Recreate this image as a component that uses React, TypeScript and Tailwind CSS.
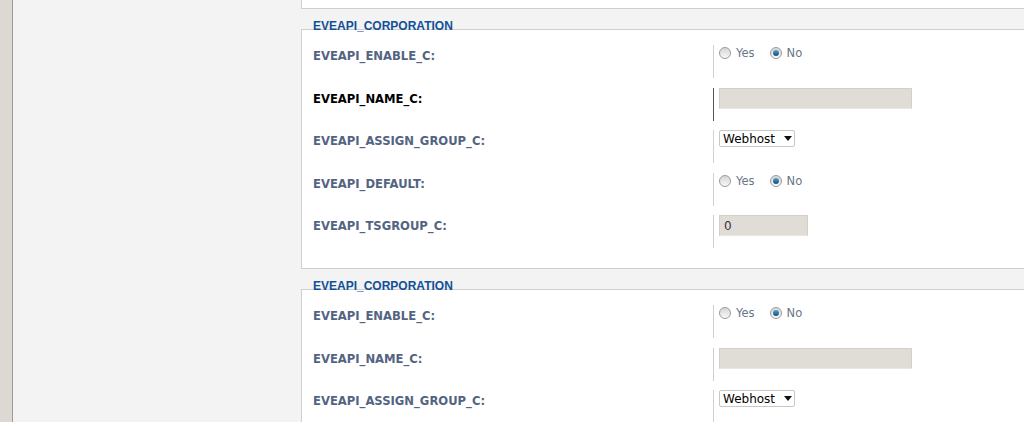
import React from "react";

type Row =
  | { label: string; kind: "radio"; hover?: boolean }
  | { label: string; kind: "text"; value?: string; width: string; hover?: boolean }
  | { label: string; kind: "select"; value: string; hover?: boolean };

const corpRows: Row[] = [
  { label: "EVEAPI_ENABLE_C:", kind: "radio" },
  { label: "EVEAPI_NAME_C:", kind: "text", width: "w-[193px]", hover: true },
  { label: "EVEAPI_ASSIGN_GROUP_C:", kind: "select", value: "Webhost" },
  { label: "EVEAPI_DEFAULT:", kind: "radio" },
  { label: "EVEAPI_TSGROUP_C:", kind: "text", value: "0", width: "w-[89px]" },
];

const corpRows2: Row[] = corpRows.slice(0, 3).map((r) => ({ ...r, hover: false }));

function Radio({ checked }: { checked?: boolean }) {
  return (
    <span className="flex h-[12px] w-[12px] items-center justify-center rounded-full border border-[#9a9a9a] bg-gradient-to-b from-[#d6d6d6] to-[#f8f8f8]">
      {checked && (
        <span className="h-[6px] w-[6px] rounded-full bg-gradient-to-b from-[#4f9fd6] to-[#10507e]" />
      )}
    </span>
  );
}

function Field({ row }: { row: Row }) {
  if (row.kind === "radio") {
    return (
      <div className="flex items-center pt-[2px] text-[11.5px] leading-[12px] text-[#6a7487]">
        <Radio />
        <span className="ml-[5px]">Yes</span>
        <span className="ml-[15px]">
          <Radio checked />
        </span>
        <span className="ml-[5px]">No</span>
      </div>
    );
  }
  if (row.kind === "select") {
    return (
      <div className="flex h-[17px] w-[76px] items-center justify-between rounded-[2px] border border-[#c8c8c8] bg-white pl-[3px] pr-[2px] font-['DejaVu_Sans',sans-serif] text-[12px] text-black">
        <span>{row.value}</span>
        <svg width="8" height="5" viewBox="0 0 8 5">
          <path d="M0 0h8L4 5z" fill="#111" />
        </svg>
      </div>
    );
  }
  return (
    <div
      className={`flex h-[21px] ${row.width} items-center border border-[#d3d0c8] border-b-[#ebe8e2] bg-[#e0ddd6] pl-[4px] font-['DejaVu_Sans',sans-serif] text-[12px] text-[#3a3046]`}
    >
      {row.value}
    </div>
  );
}

function Fieldset({ legend, rows }: { legend: string; rows: Row[] }) {
  return (
    <div className="flex flex-col">
      <div className="relative mt-[10px] h-[14px] pl-[12px] font-['Liberation_Sans',Arial,sans-serif] text-[12px] font-bold leading-[14px] text-[#115098]">
        {legend}
      </div>
      <div className="-mt-[4px] flex h-[240px] flex-col gap-[9.5px] border-t border-b border-l border-[#cfcfcf] bg-white pt-[15px]">
        {rows.map((row, i) => (
          <div key={i} className="flex h-[33px]">
            <div
              className={`w-[411px] shrink-0 pl-[11px] pt-[4px] text-[11.6px] font-bold leading-[14px] ${
                row.hover ? "text-black" : "text-[#536482]"
              }`}
            >
              {row.label}
            </div>
            <div
              className={`flex-1 border-l pl-[5px] ${
                row.hover ? "border-[#555]" : "border-[#d0d0d0]"
              }`}
            >
              <Field row={row} />
            </div>
          </div>
        ))}
      </div>
    </div>
  );
}

export default function App() {
  return (
    <div className="flex h-[422px] w-[1024px] overflow-hidden bg-[#f3f3f3] font-['DejaVu_Sans',Verdana,sans-serif]">
      <div className="w-[13px] shrink-0 border-r border-[#9c9a96] bg-[#dcd9d2]" />
      <div className="flex-1 pl-[288px]">
        <div className="h-[9px] border-b border-l border-[#cfcfcf] bg-white" />
        <Fieldset legend="EVEAPI_CORPORATION" rows={corpRows} />
        <Fieldset legend="EVEAPI_CORPORATION" rows={corpRows2} />
      </div>
    </div>
  );
}
